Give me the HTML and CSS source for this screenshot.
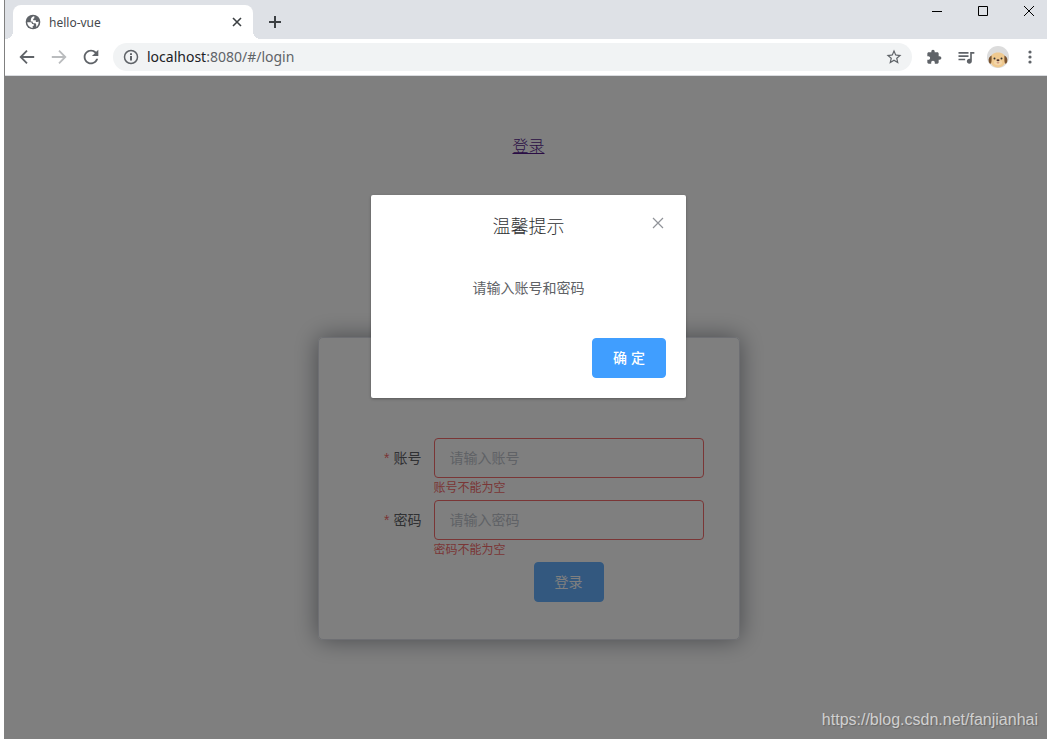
FILE: index.html
```html
<!DOCTYPE html>
<html lang="zh-CN">
<head>
<meta charset="utf-8">
<title>hello-vue</title>
<link rel="stylesheet" href="styles.css">
</head>
<body>
<div class="window">
  <header class="tab-strip">
    <div class="tab">
      <svg class="tab-globe" viewBox="0 0 24 24"><circle cx="12" cy="12" r="11"/><path class="land" d="M11.500 21C7 20.500 3.500 17 3.300 12.500H8c1.800 0 2.500.8 2.500 2.500h2.500v3h-1.500zM9 7.500c.3-2.500 2-4 5-4.300v2.500c0 1-.7 1.600-1.700 1.600v2.200h4v2.500h2.200l2-.8c.2 3.600-1.300 6.500-3.700 8.200V16c-.3-1.500-1-2-2.300-2H12l-.8-2.700H8.500z"/></svg>
      <span class="tab-title">hello-vue</span>
      <button class="icon-button small" aria-label="关闭标签页"><svg class="stroke dark" viewBox="0 0 16 16"><path d="M4 4l8 8M12 4l-8 8"/></svg></button>
    </div>
    <button class="icon-button new-tab" aria-label="新标签页"><svg class="stroke dark" viewBox="0 0 16 16"><path d="M8 2v12M2 8h12"/></svg></button>
    <div class="window-controls">
      <button class="control" aria-label="最小化"><svg viewBox="0 0 10 10"><path d="M0 5.500h10"/></svg></button>
      <button class="control" aria-label="最大化"><svg viewBox="0 0 10 10"><path d="M.5 .5h9v9h-9z"/></svg></button>
      <button class="control last" aria-label="关闭"><svg viewBox="0 0 10 10"><path d="M0 0l10 10M10 0l-10 10"/></svg></button>
    </div>
  </header>

  <nav class="toolbar">
    <button class="icon-button" aria-label="后退"><svg class="stroke" viewBox="0 0 20 20"><path d="M18 10H4M10 3L3 10l7 7"/></svg></button>
    <button class="icon-button disabled" aria-label="前进"><svg class="stroke" viewBox="0 0 20 20"><path d="M2 10h14M10 3l7 7-7 7"/></svg></button>
    <button class="icon-button reload" aria-label="重新加载"><svg viewBox="0 0 24 24"><path d="M17.650 6.350C16.200 4.900 14.210 4 12 4c-4.420 0-7.990 3.580-7.990 8s3.570 8 7.990 8c3.730 0 6.840-2.550 7.730-6h-2.080c-.82 2.330-3.040 4-5.650 4-3.310 0-6-2.690-6-6s2.690-6 6-6c1.660 0 3.140.69 4.220 1.780L13 11h7V4l-2.350 2.350z"/></svg></button>
    <div class="omnibox">
      <svg class="info" viewBox="0 0 16 16"><circle cx="8" cy="8" r="6.500"/><path d="M8 7v4.500M8 4.200v1.700"/></svg>
      <span class="url"><span class="host">localhost</span>:8080/#/login</span>
      <button class="icon-button" aria-label="收藏"><svg viewBox="0 0 24 24"><path d="M22 9.240l-7.190-.62L12 2 9.190 8.630 2 9.240l5.460 4.730L5.820 21 12 17.270 18.180 21l-1.630-7.030L22 9.240zM12 15.400l-3.760 2.270 1-4.280-3.320-2.880 4.380-.38L12 6.100l1.710 4.040 4.380.38-3.320 2.880 1 4.280L12 15.400z"/></svg></button>
    </div>
    <button class="icon-button extension" aria-label="扩展程序"><svg viewBox="0 0 24 24"><path d="M20.500 11H19V7c0-1.100-.9-2-2-2h-4V3.500C13 2.120 11.880 1 10.500 1S8 2.120 8 3.500V5H4c-1.100 0-1.990.9-1.990 2v3.800H3.500c1.490 0 2.700 1.210 2.700 2.700s-1.210 2.700-2.700 2.700H2V20c0 1.100.9 2 2 2h3.800v-1.500c0-1.490 1.210-2.700 2.700-2.700s2.700 1.210 2.700 2.700V22H17c1.100 0 2-.9 2-2v-4h1.500c1.380 0 2.500-1.120 2.500-2.500S21.880 11 20.500 11z"/></svg></button>
    <button class="icon-button media" aria-label="媒体控制"><svg viewBox="0 0 24 24"><path d="M15 6H3v2h12V6zm0 4H3v2h12v-2zM3 16h8v-2H3v2zM17 6v8.180c-.31-.11-.65-.18-1-.18-1.660 0-3 1.340-3 3s1.340 3 3 3 3-1.340 3-3V8h3V6h-5z"/></svg></button>
    <button class="icon-button avatar" aria-label="用户"><svg viewBox="0 0 22 22"><circle cx="11" cy="11" r="11" fill="#dcdcdc"/><path d="M3.500 13c0-4 3-6.500 7.500-6.500s7.500 2.500 7.500 6.500c0 2 .2 3-.6 4.500-1.600 2.500-4 4-6.900 4s-5.300-1.500-6.900-4C3.300 16 3.500 15 3.500 13z" fill="#efc98f"/><path d="M4.600 9.500C2.300 10.500 1.300 12.500 1.700 15c.3 2 1.300 3 2.200 2.600C4.800 16 4.600 12 4.600 9.500zM17.400 9.500c2.300 1 3.300 3 2.900 5.500-.3 2-1.300 3-2.200 2.600-.9-1.600-.7-5.600-.7-8.100z" fill="#7a532e"/><ellipse cx="11" cy="16.500" rx="4" ry="2.800" fill="#f3d6a8"/><circle cx="7.500" cy="12.500" r="1" fill="#333"/><circle cx="14.500" cy="12.500" r="1" fill="#333"/><ellipse cx="11" cy="14.300" rx="1.500" ry="1" fill="#4a302a"/><path d="M9.300 16.500h3.400l-1.700 1.100z" fill="#b0605a"/></svg></button>
    <button class="icon-button" aria-label="菜单"><svg viewBox="0 0 18 18"><circle cx="9" cy="4" r="1.600"/><circle cx="9" cy="9" r="1.600"/><circle cx="9" cy="14" r="1.600"/></svg></button>
  </nav>

  <main class="page">
    <div class="page-nav"><a href="#/login">登录</a></div>
    <form class="login-card" novalidate>
      <div class="form-item">
        <label for="account">账号</label>
        <div class="field">
          <input id="account" type="text" placeholder="请输入账号">
          <p class="error">账号不能为空</p>
        </div>
      </div>
      <div class="form-item">
        <label for="password">密码</label>
        <div class="field">
          <input id="password" type="password" placeholder="请输入密码">
          <p class="error">密码不能为空</p>
        </div>
      </div>
      <div class="form-item actions"><button type="button" class="primary focused">登录</button></div>
    </form>

    <div class="overlay">
      <section class="dialog" role="dialog" aria-labelledby="dialog-title">
        <header class="dialog-header">
          <h2 id="dialog-title">温馨提示</h2>
          <button class="dialog-close" aria-label="关闭"><svg viewBox="0 0 16 16"><path d="M3 3l10 10M13 3l-10 10"/></svg></button>
        </header>
        <p class="dialog-body">请输入账号和密码</p>
        <footer class="dialog-footer"><button class="primary confirm">确 定</button></footer>
      </section>
    </div>
    <span class="watermark">https://blog.csdn.net/fanjianhai</span>
  </main>
</div>
</body>
</html>
```
FILE: styles.css
```css
* { box-sizing: border-box; }

body {
  margin: 0;
  padding-left: 4px;
  background: #fff;
  font-family: "Liberation Sans", "Noto Sans CJK SC", sans-serif;
  font-size: 14px;
}

button, input { font: inherit; }
p, h2 { margin: 0; font-weight: 400; }

.window {
  display: flex;
  flex-direction: column;
  min-height: 100vh;
  border-left: 1px solid #808080;
}

/* Browser chrome */
.tab-strip {
  display: flex;
  height: 39px;
  padding-left: 8px;
  background: #dee1e6;
}

.tab {
  position: relative;
  display: flex;
  align-items: center;
  width: 240px;
  margin-top: 5px;
  padding: 0 8px 0 12px;
  border-radius: 8px 8px 0 0;
  background: #fff;
}

.tab::before, .tab::after {
  content: "";
  position: absolute;
  bottom: 0;
  width: 8px;
  height: 8px;
}
.tab::before { left: -8px; background: radial-gradient(circle at 0 0, transparent 8px, #fff 8px); }
.tab::after { right: -8px; background: radial-gradient(circle at 100% 0, transparent 8px, #fff 8px); }

.tab-globe { width: 16px; height: 16px; fill: #5f6368; }
.tab-globe .land { fill: #fff; }

.tab-title {
  flex: 1;
  margin-left: 8px;
  font-family: "Noto Sans", sans-serif;
  font-size: 12px;
  color: #45484c;
}

.icon-button {
  display: flex;
  flex: none;
  align-items: center;
  justify-content: center;
  width: 24px;
  height: 24px;
  padding: 0;
  border: 0;
  background: none;
}
.icon-button svg { width: 18px; height: 18px; fill: #5f6368; }
.icon-button .stroke { fill: none; stroke: #5f6368; stroke-width: 2; }
.icon-button .dark { stroke: #3c4043; }
.icon-button.small { width: 16px; height: 16px; }
.icon-button.small svg { width: 16px; height: 16px; stroke-width: 1.6; }
.icon-button.disabled .stroke { stroke: #babcbe; }
.icon-button.reload svg, .icon-button.avatar svg { width: 22px; height: 22px; }
.icon-button.media svg { width: 20px; height: 20px; }
.icon-button.extension svg { width: 16px; height: 16px; }

.new-tab { margin: 10px 0 0 10px; }
.new-tab svg { width: 16px; height: 16px; }

.window-controls {
  display: flex;
  gap: 10px;
  margin-left: auto;
}
.control {
  display: flex;
  align-items: center;
  justify-content: center;
  width: 36px;
  height: 22px;
  padding: 0;
  border: 0;
  background: none;
}
.control svg { width: 10px; height: 10px; fill: none; stroke: #000; }

.toolbar {
  display: flex;
  align-items: center;
  gap: 8px;
  height: 37px;
  padding: 0 5px 0 10px;
  border-bottom: 1px solid #dadce0;
  background: #fff;
}

.omnibox {
  display: flex;
  flex: 1;
  align-items: center;
  height: 28px;
  margin: 0 2px;
  padding: 0 6px 0 10px;
  border-radius: 14px;
  background: #f1f3f4;
}
.info { width: 16px; height: 16px; fill: none; stroke: #5f6368; stroke-width: 2; }
.info circle { stroke-width: 1.5; }

.url {
  flex: 1;
  margin-left: 8px;
  font-family: "Noto Sans", sans-serif;
  line-height: 18px;
  color: #5f6368;
}
.host { color: #202124; }

/* Page */
.page {
  position: relative;
  flex: 1;
  padding: 60px 0 20px 5px;
}

.page-nav { font-size: 16px; font-weight: 300; line-height: 22px; text-align: center; }
.page-nav a { color: #551a8b; }

.login-card {
  width: 422px;
  margin: 179px auto 0;
  padding: 100px 35px 15px;
  border: 1px solid #dcdfe6;
  border-radius: 5px;
  box-shadow: 0 0 25px #909399;
}

.form-item { display: flex; margin-bottom: 22px; }
.form-item label {
  width: 80px;
  padding-right: 12px;
  line-height: 40px;
  text-align: right;
  color: #606266;
}
.form-item label::before { content: "*"; margin-right: 4px; color: #f56c6c; }

.field { position: relative; flex: 1; }
.field input {
  display: block;
  width: 100%;
  height: 40px;
  padding: 0 15px;
  border: 1px solid #f56c6c;
  border-radius: 4px;
  background: #fff;
}
.field input::placeholder { color: #c0c4cc; }

.error {
  position: absolute;
  top: 100%;
  left: 0;
  padding-top: 4px;
  font-size: 12px;
  line-height: 13px;
  color: #f56c6c;
}

.actions { justify-content: center; padding-left: 80px; }

.primary {
  height: 40px;
  padding: 0 20px 2px;
  border: 1px solid #409eff;
  border-radius: 4px;
  background: #409eff;
  color: #fff;
}
.primary.focused { border-color: #66b1ff; background: #66b1ff; }

/* Message dialog */
.overlay {
  position: absolute;
  inset: 0;
  padding: 119px 0 0 5px;
  background: rgba(0, 0, 0, 0.5);
}

.dialog {
  width: 30%;
  min-width: 315px;
  margin: 0 auto;
  border-radius: 2px;
  background: #fff;
  box-shadow: 0 1px 3px rgba(0, 0, 0, 0.3);
}

.dialog-header { position: relative; padding: 20px 20px 10px; }
.dialog-header h2 {
  font-size: 18px;
  font-weight: 300;
  line-height: 24px;
  text-align: center;
  color: #303133;
}
.dialog-close {
  position: absolute;
  top: 20px;
  right: 20px;
  width: 16px;
  height: 16px;
  padding: 0;
  border: 0;
  background: none;
}
.dialog-close svg { display: block; fill: none; stroke: #909399; stroke-width: 1.2; }

.dialog-body {
  padding: 30px 20px;
  line-height: 19px;
  text-align: center;
  color: #606266;
}

.dialog-footer { padding: 10px 20px 20px; text-align: right; }
.dialog-footer .primary { display: inline-block; vertical-align: top; }
.confirm { font-weight: 500; }

.watermark {
  position: absolute;
  right: 9px;
  bottom: 10px;
  font-size: 16px;
  line-height: 18px;
  color: #d0d0d0;
  text-shadow: 1px 1px 1px #666;
}
```
